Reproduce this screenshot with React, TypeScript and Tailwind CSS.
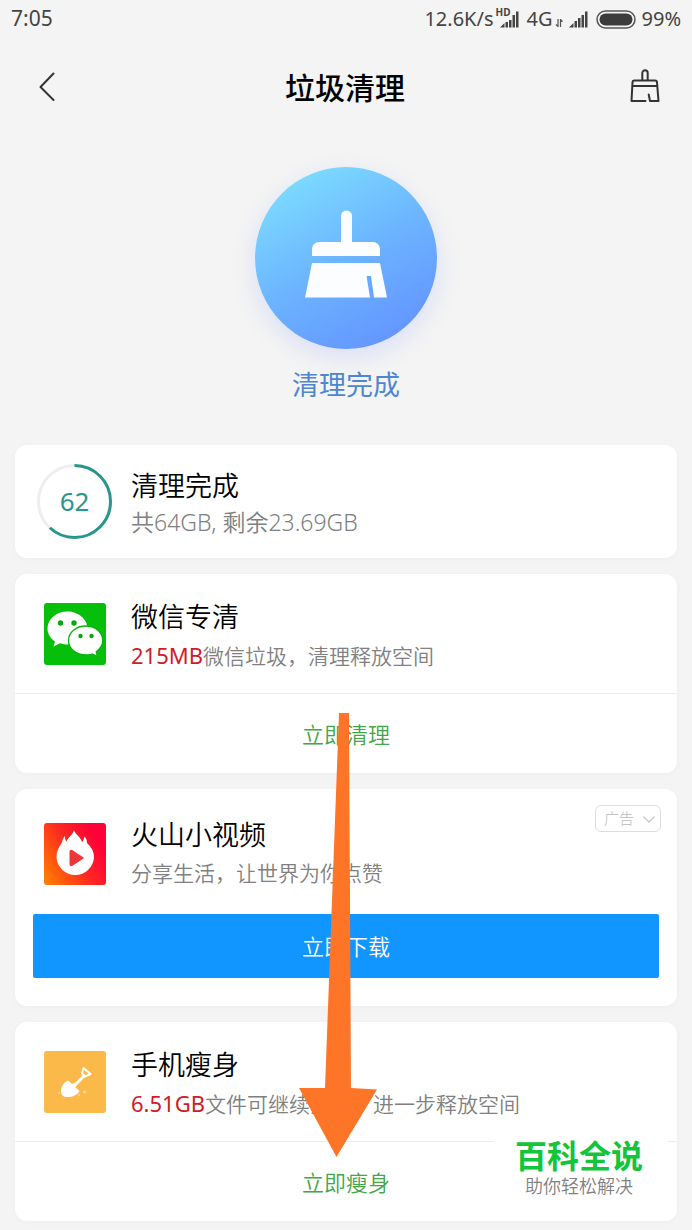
import type { ReactNode } from 'react';

interface CardProps {
  icon: ReactNode;
  title: string;
  children: ReactNode;
}

export default function App() {
  return (
    <div className="relative w-full bg-[#f4f4f4] font-['Noto_Sans','Noto_Sans_CJK_SC',sans-serif] text-black">
      <StatusBar />

      <header className="flex h-24 items-center justify-between pl-8 pr-7">
        <button aria-label="返回" className="cursor-pointer p-1">
          <svg width="24" height="32" viewBox="0 0 24 32" fill="none" stroke="#333" strokeWidth="2" strokeLinecap="round" strokeLinejoin="round">
            <path d="M17.5 3.5 4.5 17 17.5 30" />
          </svg>
        </button>
        <h1 className="pt-1 text-[30px] leading-10 font-medium">垃圾清理</h1>
        <button aria-label="清理" className="cursor-pointer p-1">
          <BrushOutline />
        </button>
      </header>

      <section className="flex flex-col items-center pt-[33px]">
        <div className="flex size-[182px] items-center justify-center rounded-full bg-linear-[150deg] from-[#80e6ff] via-[#6cb4ff] via-50% to-[#618cff] pb-2 shadow-[0_8px_24px_rgba(110,140,255,0.2)]">
          <BrushSolid />
        </div>
        <p className="mt-4 text-[27px] leading-10 text-[#4f86d0]">清理完成</p>
      </section>

      <main className="flex flex-col gap-4 px-[15px] pt-10 pb-[9px]">
        <section className="flex h-[113px] items-center rounded-xl bg-white pl-[21px] shadow-[0_1px_6px_rgba(0,0,0,0.03)]">
          <Ring value={62} />
          <div className="ml-[18px] pt-1">
            <h2 className="text-[27px] leading-9 font-[350]">清理完成</h2>
            <p className="text-[23px] leading-9 font-[350] text-[#808080]">共64GB, 剩余23.69GB</p>
          </div>
        </section>

        <ActionCard icon={<WechatIcon />} title="微信专清" action="立即清理">
          <span className="text-[22px] font-normal text-[#d01c26]">215MB</span>微信垃圾，清理释放空间
        </ActionCard>

        <section className="relative rounded-xl bg-white px-[18px] pt-[27px] pb-7 shadow-[0_1px_6px_rgba(0,0,0,0.03)]">
          <div className="flex items-center pl-[11px]">
            <CardHead icon={<HuoshanIcon />} title="火山小视频">
              分享生活，让世界为你点赞
            </CardHead>
          </div>
          <button className="absolute top-4 right-4 flex h-[27px] w-[66px] cursor-pointer items-center justify-between rounded-md border border-[#ddd] pr-1 pl-2 text-[15px] font-light text-[#bbb]">
            广告
            <svg width="14" height="14" viewBox="0 0 14 14" fill="none" stroke="#c8c8c8" strokeWidth="1.3">
              <path d="m1.5 4.5 5.5 5.5 5.5-5.5" />
            </svg>
          </button>
          <button className="mt-[22px] h-16 w-full cursor-pointer rounded-xs bg-[#1195ff] text-[22px] font-[350] text-white">
            立即下载
          </button>
        </section>

        <ActionCard icon={<ShovelIcon />} title="手机瘦身" action="立即瘦身">
          <span className="text-[22px] font-normal text-[#d01c26]">6.51GB</span>文件可继续清理，进一步释放空间
        </ActionCard>
      </main>

      <div className="absolute right-6 bottom-4 flex h-[88px] w-[174px] flex-col items-center justify-center bg-white pr-1 pb-1">
        <p className="text-[32px] leading-9 font-bold text-[#12c53a]">百科全说</p>
        <p className="text-lg leading-6 font-[350] text-[#808080]">助你轻松解决</p>
      </div>

      <svg className="pointer-events-none absolute top-[713px] left-[299px]" width="78" height="444" viewBox="0 0 78 444" aria-hidden="true">
        <path d="M40 0h10l2 375 26 1.500L37.500 444 0 375h26z" fill="#ff7528" />
      </svg>
    </div>
  );
}

function StatusBar() {
  return (
    <div className="flex h-[38px] items-center justify-between px-[11px] text-xl text-[#444]">
      <span className="text-[21px]">7:05</span>
      <div className="flex items-center">
        <span>12.6K/s</span>
        <span className="relative ml-1.5">
          <span className="absolute -top-1 -left-1 text-[10px] leading-3 font-bold">HD</span>
          <svg width="19" height="18" viewBox="0 0 19 18" fill="#444">
            <path d="M0 17.500 4.500 13v4.500zM5.500 12h2.500v5.500H5.500zM9 10h2.500v7.500H9zM12.500 5h2.500v12.500h-2.500zM16 1.500h2.500v16H16z" />
          </svg>
        </span>
        <span className="ml-2">4G</span>
        <svg className="mt-2 ml-0.5" width="8" height="8" viewBox="0 0 8 8" fill="none" stroke="#555" strokeWidth="1.200">
          <path d="M3 0v7.500L1 5.500M5.500 8V.500l2 2" />
        </svg>
        <svg className="ml-1.5" width="19" height="18" viewBox="0 0 19 18" fill="#444">
          <path d="M0 17.500 4.500 13v4.500zM5.500 11h2.500v6.500H5.500zM9 8h2.500v9.500H9zM12.500 5h2.500v12.500h-2.500zM16 1.500h2.500v16H16z" />
        </svg>
        <svg className="ml-2" width="40" height="19" viewBox="0 0 40 19">
          <rect x="1" y="1" width="38" height="17" rx="8.500" fill="none" stroke="#555" strokeWidth="1.500" />
          <rect x="3.500" y="3.500" width="33" height="12" rx="6" fill="#3c3c3c" />
        </svg>
        <span className="ml-1.5">99%</span>
      </div>
    </div>
  );
}

function CardHead({ icon, title, children }: CardProps) {
  return (
    <>
      <div className="size-[62px] shrink-0 overflow-hidden rounded-[3px]">{icon}</div>
      <div className="ml-[25px]">
        <h2 className="text-[27px] leading-[38px] font-[350]">{title}</h2>
        <p className="text-[21px] leading-[38px] font-[350] text-[#808080]">{children}</p>
      </div>
    </>
  );
}

function ActionCard({ icon, title, action, children }: CardProps & { action: string }) {
  return (
    <section className="rounded-xl bg-white shadow-[0_1px_6px_rgba(0,0,0,0.03)]">
      <div className="flex h-[120px] items-center border-b border-[#ececec] pl-[29px] *:last:pt-1.5">
        <CardHead icon={icon} title={title}>{children}</CardHead>
      </div>
      <button className="h-[79px] w-full cursor-pointer pt-0.5 text-[22px] font-[350] text-[#43a648]">
        {action}
      </button>
    </section>
  );
}

function Ring({ value }: { value: number }) {
  return (
    <div className="grid size-[77px] place-items-center">
      <svg className="col-start-1 row-start-1" width="77" height="77" viewBox="0 0 77 77" fill="none" strokeWidth="3">
        <circle cx="38.500" cy="38.500" r="36" stroke="#eee" />
        <circle
          cx="38.500"
          cy="38.500"
          r="36"
          stroke="#26978e"
          pathLength={100}
          strokeDasharray={`${value} 100`}
          transform="rotate(-90 38.500 38.500)"
        />
      </svg>
      <span className="col-start-1 row-start-1 text-[26px] text-[#26978e]">{value}</span>
    </div>
  );
}

function BrushOutline() {
  return (
    <svg width="30" height="34" viewBox="0 0 30 34" fill="none" stroke="#333" strokeWidth="2" strokeLinejoin="round" strokeLinecap="round">
      <path d="M12.300 11V4a2.700 2.700 0 0 1 5.400 0v7" />
      <path d="M15.500 32H1.500L2.500 13.500Q2.500 11.500 4.500 11.500H25Q27 11.500 27 13.500L28.500 32H20L18.700 25.500M3 17H27" />
    </svg>
  );
}

function BrushSolid() {
  return (
    <svg width="84" height="90" viewBox="0 0 84 90" fill="#fbfdff">
      <path d="M37 33V7a5.500 5.500 0 0 1 11 0v26h21a7 7 0 0 1 7 7v7H8v-7a7 7 0 0 1 7-7z" />
      <path d="M8 54H76L83 88.500H70L67 67H62.500L66 88.500H1z" />
    </svg>
  );
}

function WechatIcon() {
  return (
    <svg width="62" height="62" viewBox="0 0 62 62">
      <rect width="62" height="62" fill="#06bf0b" />
      <path d="M23.500 8.500C12.500 8.500 3.500 16 3.500 25.500c0 5.500 3 9.800 7.500 13L9.500 43.500l6.500-3.200c2.500.800 5 1.200 7.500 1.200 11 0 20-7 20-16S34.500 8.500 23.500 8.500z" fill="#fff" />
      <circle cx="16.500" cy="20" r="2.700" fill="#06a80b" />
      <circle cx="30" cy="20" r="2.700" fill="#06a80b" />
      <path d="M42 23C32 23 24.500 29.500 24.500 37.500S32 52 42 52c2.200 0 4.300-.300 6.200-1L53.500 53.500l-1.300-4.800c4-2.800 6.500-6.700 6.500-11.200C58.700 29.500 51.500 23 42 23z" fill="#fff" stroke="#06b40b" strokeWidth="1.300" />
      <circle cx="36.500" cy="33" r="2.200" fill="#06a80b" />
      <circle cx="47.500" cy="33" r="2.200" fill="#06a80b" />
    </svg>
  );
}

function HuoshanIcon() {
  return (
    <svg width="62" height="62" viewBox="0 0 62 62">
      <defs>
        <linearGradient id="lava" x1="0" y1="0.850" x2="0.900" y2="0.300">
          <stop offset="0" stopColor="#ff7a00" />
          <stop offset="0.550" stopColor="#ff2a20" />
          <stop offset="1" stopColor="#ff0038" />
        </linearGradient>
      </defs>
      <rect width="62" height="62" fill="url(#lava)" />
      <path d="M30 7c1.500 5 6.500 6.500 8 12 1.500-1 2-3 2.300-5.500 2.200 2 2.700 4 2.700 6.500 4 4 7 8 7 14.500a18.800 18.800 0 0 1-37.500 0C12.500 28 15.500 23 18 19.500c.500-2.500 1-4.500 3-6.500-.200 2.300.300 4 1.500 5.500C24 14 29 12 30 7z" fill="#fff" />
      <path d="M28 27.500 39.500 35 28 42.500Q26 43.500 26 41.500V28.500Q26 26.500 28 27.500z" fill="#f0353a" stroke="#f0353a" strokeLinejoin="round" />
    </svg>
  );
}

function ShovelIcon() {
  return (
    <svg width="62" height="62" viewBox="0 0 62 62" fill="none">
      <rect width="62" height="62" fill="#fbb94a" />
      <path d="M30 35 41 24" stroke="#fff" strokeWidth="3" />
      <path d="M39.500 17 46.500 23 41 25.500 38 22.500z" stroke="#fff" strokeWidth="2" strokeLinejoin="round" />
      <path d="M24 29.500 28 33l2.500-1 2 2-1 2.500 4 3.500c-2.500 4-7 6-11.500 6C19 46 17 44 17 40c0-4.500 3-8.500 7-10.500z" fill="#fff" />
      <g fill="#fdd792">
        <circle cx="40.500" cy="41" r="1.700" />
        <circle cx="35" cy="44" r="1" />
        <circle cx="15" cy="42" r="1" />
      </g>
    </svg>
  );
}
